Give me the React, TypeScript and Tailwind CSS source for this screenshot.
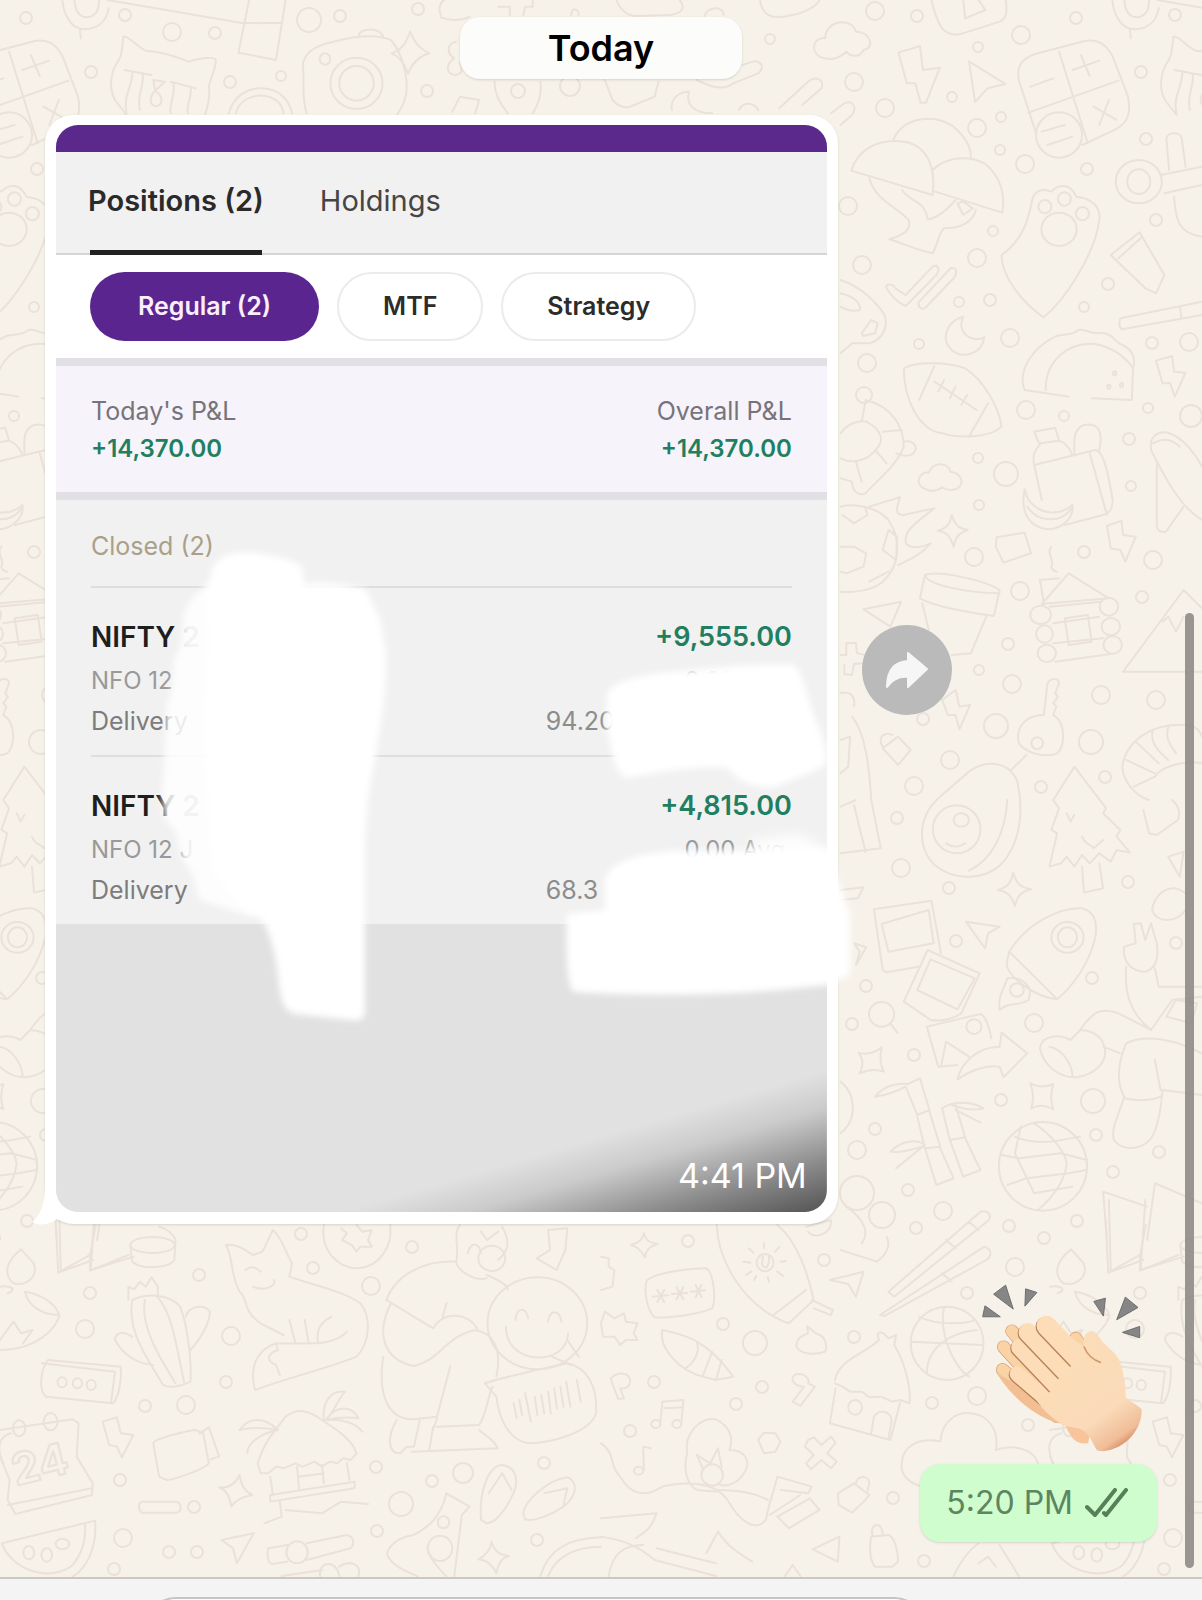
import React from 'react';

interface Position {
    id: number;
    name: string;
    suffix: string;
    exchange: string;
    product: string;
    price: string;
    pnl: string;
}

interface Sheet {
    x: number;
    y: number;
    paths: string[];
}

const positions: Position[] = [
    { id: 1, name: 'NIFTY', suffix: '2', exchange: 'NFO 12', product: 'Delivery', price: '94.20', pnl: '+9,555.00' },
    { id: 2, name: 'NIFTY', suffix: '2', exchange: 'NFO 12 J', product: 'Delivery', price: '68.3', pnl: '+4,815.00' },
];

const filters = ['Regular (2)', 'MTF', 'Strategy'];

const WALLPAPER_PERIOD = 1050;

// [cx, cy, r]
const bubbles = [
    [875, 11, 9], [917, 16, 6], [770, 39, 5], [854, 82, 9], [885, 108, 9], [978, 47, 5], [1021, 35, 9], [952, 97, 5],
    [1001, 117, 5], [977, 128, 9], [1000, 150, 5], [1025, 164, 9], [1076, 18, 6], [1175, 15, 6], [1141, 72, 6],
    [1146, 139, 6], [1087, 169, 6], [1156, 220, 6], [1108, 284, 6], [1084, 307, 5], [848, 206, 9], [862, 265, 9],
    [977, 258, 9], [993, 231, 5], [990, 300, 6], [959, 302, 5], [1010, 338, 9], [919, 344, 5], [867, 363, 9],
    [1152, 343, 6], [1189, 342, 9], [864, 395, 8], [1026, 410, 9], [1064, 416, 5], [1148, 408, 5], [1191, 416, 11],
    [1129, 439, 6], [978, 458, 5], [1006, 474, 12], [1131, 486, 5], [979, 505, 5], [974, 557, 9], [1084, 552, 6],
    [1153, 560, 9], [1020, 591, 9], [1142, 597, 6], [1008, 644, 6], [979, 670, 5], [1012, 684, 9], [1101, 695, 9],
    [1156, 700, 9], [923, 719, 6], [996, 726, 12], [1091, 742, 12], [950, 760, 9], [914, 786, 9], [1105, 777, 6],
    [1041, 787, 6], [897, 818, 6], [901, 868, 9], [949, 888, 6], [1128, 882, 6], [956, 941, 6], [1176, 943, 6],
    [1092, 978, 6], [866, 986, 6], [852, 1024, 6], [1034, 1023, 9], [914, 1055, 6], [1001, 1100, 6], [1093, 1101, 12],
    [875, 1129, 6], [1096, 1135, 6], [857, 1150, 9], [1159, 1152, 6], [1113, 1172, 6], [908, 1190, 6], [857, 1193, 17],
    [882, 1215, 13], [943, 1211, 9], [916, 1228, 6], [1009, 1226, 6], [1077, 1221, 6], [1044, 1238, 6],
    [309, 20, 12], [340, 16, 6], [172, 32, 9], [215, 33, 6], [230, 82, 6], [281, 76, 5], [427, 91, 6], [418, 9, 6],
    [518, 91, 7], [570, 86, 10], [301, 1234, 6], [313, 1268, 6], [199, 1275, 6], [90, 1293, 6], [85, 1329, 9],
    [231, 1336, 9], [226, 1382, 6], [145, 1406, 6], [186, 1405, 9], [371, 1286, 9], [412, 1247, 6], [120, 1480, 6],
    [376, 1467, 6], [432, 1481, 6], [463, 1473, 10], [544, 1463, 6], [401, 1504, 12], [194, 1507, 6], [123, 1538, 9],
    [169, 1552, 6], [197, 1552, 6], [377, 1531, 6], [537, 1540, 6], [114, 1569, 6], [688, 1241, 6], [824, 1260, 6],
    [723, 1324, 6], [755, 1343, 12], [854, 1337, 6], [654, 1382, 6], [762, 1387, 6], [736, 1404, 6], [630, 1431, 6],
    [967, 1293, 6], [1015, 1267, 9], [977, 1396, 9], [932, 1403, 6], [1028, 1425, 6], [893, 1498, 6], [924, 1561, 6],
];

const oval = (x: number, y: number, rx: number, ry: number) =>
    `M${x - rx} ${y}a${rx} ${ry} 0 1 0 ${rx * 2} 0a${rx} ${ry} 0 1 0 ${-rx * 2} 0`;

const sheets: Sheet[] = [
    {
        x: 0,
        y: 0,
        paths: [
            // cat box
            'M322 110C335 105 355 140 380 152C430 155 470 175 492 185C520 172 560 170 563 180C565 200 550 230 545 260C550 300 540 320 535 345M322 110C318 140 320 160 310 180C285 220 285 270 300 300L330 345',
            'M325 210L395 225M345 220C345 260 320 290 330 340M372 222C378 260 355 280 365 330M445 245L510 265M452 250C460 280 440 310 445 340M497 262C502 290 485 310 490 340M400 240L430 245L402 275C385 300 395 320 410 318C430 310 420 280 405 275Z',
            // kite
            'M280 0L635 70M650 0L622 158L720 180L745 0M635 70L735 68',
            // camera
            'M800 340C785 290 795 230 790 190C800 150 830 135 870 125C920 110 980 100 1020 120C1050 160 1065 230 1060 280C1055 310 1045 330 1035 345M935 105C945 85 985 80 1000 108',
            oval(930, 250, 68, 77), oval(930, 250, 45, 52), oval(848, 177, 14, 17),
            'M1070 95C1085 140 1105 150 1120 160C1090 170 1075 190 1065 220C1050 180 1035 165 1022 160C1055 145 1060 125 1070 95Z',
            'M1190 125C1165 130 1165 160 1185 175C1160 195 1165 225 1190 225C1210 220 1205 200 1200 190',
            'M597 340C610 285 650 262 685 265C730 268 755 300 762 340M615 340C625 300 655 285 685 287C720 290 735 310 740 340',
            'M1180 335L1200 290L1250 300L1240 340M1290 245C1290 290 1310 320 1325 340M1410 245C1415 290 1400 320 1390 340',
            'M1150 45C1140 20 1155 0 1160 0M1150 52C1180 65 1210 60 1225 50M1300 20L1330 20L1330 45M1390 0L1390 20L1370 20L1365 45M1490 45C1490 20 1510 25 1510 45',
        ],
    },
    {
        x: 601,
        y: 0,
        paths: [
            'M570 170C545 150 555 110 585 115C585 60 655 50 665 95C705 95 715 145 685 150C675 175 650 170 640 155C620 175 600 185 570 170Z',
            'M776 158L832 138L840 210L884 203L848 308L834 308L820 250L798 250Z',
            'M960 184L1055 252L1008 265L976 306Z',
            // calculator
            'M1135 400L1090 240C1084 200 1095 178 1130 163L1265 122C1300 118 1320 135 1335 170L1375 290C1385 350 1370 375 1330 395L1255 435M1195 155L1270 430M1115 338L1350 242M1120 260L1180 235M1230 210L1300 182M1252 165L1275 228M1285 320L1345 360M1325 300L1300 375',
            oval(1195, 405, 60, 68),
            'M1150 395L1210 375M1165 435L1230 410',
            'M862 0C868 30 875 60 890 85C905 105 930 108 950 98L1040 65C1060 55 1060 30 1056 0M945 0L950 55L1003 30L985 0',
            'M1334 0C1338 50 1360 90 1395 88C1430 85 1450 60 1455 25M1365 0C1368 35 1380 52 1398 52C1420 50 1430 30 1430 0M1380 88L1382 115',
            // balloons
            'M653 512C670 450 720 415 790 425C850 435 875 500 865 585ZM763 418C790 350 870 340 920 380C950 410 965 440 965 470M865 510C900 470 960 465 1000 490C1045 530 1055 590 1047 638L872 575',
            'M700 535C715 600 770 620 803 660C810 690 790 705 752 718C790 730 820 750 865 760C880 730 880 700 895 685C940 685 970 665 978 630M785 570C810 610 845 600 852 658C880 655 905 625 925 600M930 610L945 605L970 625L945 645Z',
            // paw
            'M1125 600C1130 570 1155 565 1175 575C1195 550 1225 550 1240 590C1280 595 1305 620 1300 660C1290 760 1210 900 1155 952C1100 910 1045 830 1045 765C1100 720 1115 660 1125 600Z',
            oval(1158, 620, 17, 20), oval(1209, 597, 17, 20), oval(1256, 641, 17, 20), oval(1195, 688, 46, 50),
            'M745 865C740 850 760 850 768 865L795 885L865 800C880 790 885 810 875 825L795 918C775 910 755 885 745 865ZM830 905L912 805C930 800 930 820 920 835L845 925C832 930 825 915 830 905Z',
            'M945 950C900 965 885 1020 915 1050C945 1080 995 1060 1000 1012C970 1030 925 1000 945 950Z',
            // taco
            'M1220 1190L1105 1170C1085 1110 1130 1040 1185 1010C1200 1000 1230 1010 1245 990C1270 985 1275 1005 1300 998C1340 1000 1335 1025 1360 1035C1390 1050 1395 1080 1388 1105L1385 1200L1280 1195M1160 1170C1160 1080 1220 1025 1290 1032C1350 1045 1380 1090 1388 1105',
            oval(1340, 1120, 4, 6), oval(1325, 1160, 4, 6), oval(1358, 1155, 4, 6),
            'M1330 765L1405 697L1470 825L1448 880L1420 865ZM1350 775L1412 710',
            oval(1403, 545, 60, 65), oval(1403, 545, 30, 37),
            'M1460 525L1568 500M1470 580L1568 555M1482 510L1475 415C1480 395 1510 395 1515 415L1525 500M1495 590C1500 650 1500 700 1568 710',
            'M1568 905L1355 955C1350 970 1352 985 1360 988L1568 945M1510 920L1515 955',
            'M1448 1082L1490 1068L1495 1115L1525 1118L1497 1190L1485 1150L1465 1150Z',
            // ball
            'M790 1105C820 1085 900 1085 950 1105C1000 1140 1040 1230 1045 1280C1020 1310 940 1318 890 1300C830 1290 790 1200 790 1105ZM870 1098L830 1200M1010 1210L960 1310M870 1145L980 1230M895 1140L880 1175M925 1160L910 1195M955 1185L940 1215',
            'M625 840C680 860 720 910 740 945C750 980 735 1020 700 1030L655 1030L625 1060M680 1000L705 960L722 970L715 1000L685 1008ZM625 880C660 890 680 910 675 930C660 935 640 930 625 920',
            'M465 325L540 245C560 225 585 240 575 265L525 315M600 340L635 310C655 300 670 320 655 345L625 375',
            'M10 240L30 300C50 325 70 325 80 318L140 290L150 245M185 330C180 300 200 275 230 275C220 310 240 340 290 340M250 240C300 270 330 265 345 250L410 220C430 200 415 180 395 185L370 195M360 330C370 305 400 305 410 330',
            'M40 0C50 30 70 48 90 48L180 45C215 40 220 20 205 0M415 0C420 50 450 60 500 45C540 35 565 15 570 0M270 48C275 20 320 15 320 45',
        ],
    },
    {
        x: 601,
        y: 400,
        paths: [
            // turtle
            'M690 0C760 20 790 80 790 140C770 200 720 240 690 280C670 290 655 270 655 245L625 235M790 125C815 120 830 140 815 160C800 175 780 165 770 160M625 100C650 60 690 60 700 70C730 90 740 120 720 145C690 190 650 190 625 175M690 5L680 65M735 95L785 90M715 150L745 190M665 185L680 245',
            // picnic bag and banana
            'M1150 300L1130 195L1290 150C1310 155 1320 200 1335 300C1335 330 1325 340 1310 345L1210 375M1130 95L1185 83L1195 122C1215 130 1225 150 1230 165M1130 95L1145 135C1130 150 1125 170 1130 195M1145 130L1195 122M1235 160C1235 120 1230 90 1260 75C1300 65 1310 100 1300 150M1275 160L1320 345',
            'M1105 268C1095 330 1110 380 1165 388C1205 388 1235 350 1230 315C1200 345 1150 350 1115 300ZM1112 320C1140 370 1200 370 1228 325',
            'M835 260C820 240 835 215 855 218C865 185 905 185 912 215C940 220 950 250 930 265C915 275 900 268 890 262C870 280 850 272 835 260Z',
            'M1568 360C1510 320 1470 230 1435 150C1430 110 1450 95 1475 97C1520 110 1555 170 1568 200M1440 130C1470 110 1490 120 1510 140M1450 190L1450 380C1455 400 1475 400 1480 385L1520 320',
            'M915 345C925 380 935 385 957 390C930 400 925 415 920 440C910 405 900 395 878 392C900 385 910 375 915 345Z',
            'M1032 412L1105 398L1122 460L1050 488L1030 440Z',
            'M1320 378L1358 362L1362 405L1395 410L1368 485L1355 450L1330 445Z',
            // flaming football
            'M625 320C660 310 720 320 750 360C785 420 780 500 735 545C710 570 660 580 625 575M700 320L780 292C770 330 765 345 790 345L870 325C820 370 790 390 795 430C810 450 840 440 860 430C830 470 800 480 775 495M630 345L660 370L695 345L690 325M625 440L660 440L692 460L685 500L640 520L625 515M750 390L772 410L770 480L735 450ZM700 545L750 515',
            // pot
            'M845 525C880 510 1000 540 1040 570L1025 648C970 640 870 620 832 595ZM845 525C850 555 960 580 1040 580M838 610L855 690M1005 650L965 760L915 765',
            'M1175 440C1160 460 1185 480 1175 500C1175 510 1185 515 1190 515',
            // log cabin
            'M1150 612L1220 520L1325 595ZM1155 605L1145 540L1195 535M1170 620L1305 605M1180 670L1300 650M1180 730L1310 715M1185 785L1330 762M1210 655L1270 645L1280 725L1220 735Z',
            oval(1147, 645, 27, 28), oval(1325, 620, 24, 27), oval(1157, 702, 22, 26), oval(1330, 680, 24, 26), oval(1163, 760, 24, 26), oval(1335, 735, 24, 26),
            'M1568 625L1520 570L1362 815L1568 815M1465 665L1480 650L1500 695L1520 650',
            'M685 628L783 605L755 680Z',
            // key
            'M1155 945L1165 850C1175 830 1195 835 1195 850L1185 880L1192 890L1180 910L1188 920L1180 945C1215 970 1210 1040 1190 1060C1160 1075 1110 1060 1090 1030C1080 980 1110 945 1155 945ZM1110 1065L1070 1110',
            oval(1138, 1030, 15, 18),
            // avocado
            'M880 1195C820 1260 830 1350 870 1395C930 1450 1020 1440 1060 1370C1100 1300 1100 1210 1085 1140C1060 1080 1000 1080 960 1115ZM1060 1200C1055 1300 1020 1380 960 1412M900 1330C920 1345 940 1340 950 1330',
            oval(928, 1288, 62, 72), oval(940, 1260, 20, 20),
            'M735 1045L775 1010L808 1050L775 1095ZM735 1040C720 1010 740 995 760 1005',
            // shrimp
            'M1568 1010C1560 980 1540 975 1520 975C1440 970 1370 1020 1360 1100C1362 1150 1400 1190 1430 1200M1480 980C1470 1020 1490 1040 1500 1060M1440 990C1430 1030 1460 1060 1480 1080M1395 1025L1455 1090M1370 1080L1445 1120M1445 1130C1460 1100 1520 1080 1568 1090M1390 1160L1445 1130',
            // pine
            'M1235 1100L1180 1200L1195 1225L1175 1290L1190 1300L1170 1400L1200 1390L1215 1370L1235 1400L1255 1365L1275 1390L1300 1360L1330 1385L1345 1350L1380 1358L1345 1310L1355 1290L1310 1240L1318 1225ZM1255 1400L1260 1478L1310 1465L1300 1390M1215 1240L1225 1265L1235 1245M1255 1310C1265 1340 1280 1330 1285 1345L1310 1320',
            'M625 880C650 870 665 890 660 920M655 950C690 1000 700 1100 705 1200M625 1020L650 1010L645 1100L625 1120',
            'M890 900L925 870L935 920L963 915L935 988L925 945L905 945Z',
            'M625 765L640 765L640 730L665 728L668 760L690 765L685 790L660 792L655 825L635 822L635 795',
        ],
    },
    {
        x: 601,
        y: 800,
        paths: [
            'M625 20L665 0M625 160L730 145L705 0M690 155L660 15M625 270L685 262L670 295L625 300',
            'M1075 218C1085 255 1095 262 1122 268C1095 275 1085 290 1080 318C1070 285 1060 275 1035 270C1060 262 1070 250 1075 218Z',
            // photos
            'M828 500L745 517L735 510L712 328L862 302L887 460M732 372L855 330L868 430L750 455Z',
            'M852 450L988 520L940 640C920 655 890 665 860 660L790 605ZM860 478L975 535L930 628L825 570Z',
            'M952 365L1040 380L1010 400L1002 445ZM660 430L692 442L665 495L675 455Z',
            // rocket
            'M1065 455C1110 370 1200 320 1255 325C1290 335 1295 370 1290 410C1275 490 1230 560 1190 598C1130 590 1060 530 1058 490ZM1065 455L1190 598M1060 535C1100 530 1130 560 1115 600C1090 620 1060 605 1040 630C1035 590 1050 570 1060 535Z',
            oval(1217, 412, 42, 46), oval(1217, 412, 25, 30), oval(1085, 570, 18, 20),
            oval(732, 643, 33, 37),
            'M755 670L773 698M930 795L880 800L850 680L990 642C1005 650 1015 690 1018 715M888 795L900 725L960 770',
            oval(973, 680, 20, 22),
            'M930 838C940 790 980 740 1040 740L1045 698L1112 760L1050 832L1040 800C1000 795 960 815 930 838Z',
            'M672 758C690 765 715 760 733 742C725 770 730 800 738 815C715 805 695 810 675 820C685 795 685 780 672 758Z',
            'M1120 850C1140 862 1160 862 1180 852C1172 880 1172 900 1180 928C1160 915 1140 915 1122 925C1130 900 1130 880 1120 850Z',
            // bamboo
            'M715 890C740 855 770 850 800 852L832 835L857 930L825 945L795 860C770 875 750 885 715 890M825 950L845 1045L885 1040L857 935M845 1045L875 1155L920 1135L885 1045M890 925L910 1020L950 1012L925 915M890 925C920 900 970 905 998 925C970 935 940 925 915 915M925 930L990 968M910 1020L945 1130L990 1110L950 1015M840 1040C820 1045 790 1060 755 1055C790 1015 830 1020 845 1035L770 1105',
            // globe
            oval(1153, 1099, 115, 133),
            'M1130 970C1170 1000 1210 1050 1215 1090C1210 1150 1170 1200 1140 1230M1080 1010C1140 1040 1200 1020 1250 1010M1045 1065L1090 1075L1200 1060L1268 1080M1060 1155L1110 1135L1220 1120L1265 1110M1095 980L1080 1060L1130 1180L1230 1160',
            // astronaut
            'M1365 440C1360 480 1380 515 1420 515C1450 505 1455 470 1450 430L1435 370L1420 420L1408 370L1390 372L1395 430ZM1370 500C1365 580 1380 640 1435 690L1490 600L1568 590M1445 505L1455 560L1568 560',
            'M1435 690L1350 640C1300 620 1280 640 1250 690L1225 720C1200 705 1150 700 1145 745C1155 800 1200 835 1240 832C1290 825 1330 780 1310 730C1300 700 1270 690 1250 690M1170 740C1200 745 1230 790 1230 830M1310 740L1355 760',
            'M1568 760C1500 720 1420 700 1370 730C1345 800 1345 850 1365 890C1350 950 1330 980 1338 1020C1360 1055 1410 1050 1435 1015C1450 990 1460 940 1465 870L1568 885M1365 895C1400 905 1440 900 1460 890M1460 870L1445 780M1475 650L1500 600L1555 610L1540 670Z',
            'M1415 30L1430 100L1450 105L1505 60C1515 30 1500 10 1490 0M1525 280C1480 240 1440 290 1438 330C1450 370 1500 370 1525 330M1480 170L1520 155L1510 230Z',
            'M625 845C665 880 670 960 625 1000',
            'M1320 1320L1310 1175L1425 1220M1425 1320L1445 1150L1568 1210',
        ],
    },
    {
        x: 0,
        y: 1200,
        paths: [
            'M845 75C835 150 880 205 935 205C990 200 1025 140 1018 75M930 75L945 95L970 90L960 120L970 140L940 140L930 155L918 135L892 120L905 100L890 85',
            'M145 60L152 218L235 165L250 75M235 165L235 212L335 165',
            oval(398, 135, 58, 24),
            'M340 140L345 185C370 210 440 205 455 180L458 120C450 95 430 85 415 80',
            // candle
            'M55 148C20 180 5 220 35 250C70 260 100 230 88 190ZM65 275C100 280 150 310 155 350C130 420 60 450 0 450M65 275C75 320 110 345 155 345M0 420L35 365L55 400L85 390L60 430M0 260C30 255 45 270 20 280',
            // cactus
            'M345 300C380 280 440 280 470 320C490 380 500 480 497 545C470 560 440 565 425 555C390 480 330 400 345 300ZM378 300C365 380 420 480 458 550M410 290C450 340 460 440 480 545M335 300L335 260L350 268L365 245L380 260L395 232L412 260L412 285M485 350C490 320 530 310 548 335C545 380 520 420 497 450M345 410C320 390 300 400 300 420C320 460 350 490 400 495',
            // fox
            'M625 275C600 220 610 180 590 135C620 130 645 155 660 165L685 155L712 90C735 110 745 160 762 190L755 230C830 260 900 275 940 310C970 350 965 430 930 470C870 500 760 530 665 570C650 500 670 450 720 430C800 430 870 440 905 395M625 275C650 300 630 330 680 370L740 405M755 360L770 425M795 360L805 428M865 350C830 370 825 400 830 428M720 430L725 450C700 460 690 480 720 495L730 525M640 210C660 190 675 210 680 215M660 260C690 275 720 260 715 240',
            // message
            'M125 480L315 500C318 540 310 590 295 610L120 590C100 570 105 510 125 480ZM110 490L300 515L290 605',
            oval(162, 547, 12, 15), oval(202, 550, 12, 15), oval(238, 555, 12, 15),
            // calendar
            'M0 690L190 658L205 670L200 770L242 850L240 885L40 942L20 900L25 840L0 770M20 915L240 865',
            oval(50, 685, 16, 24), oval(132, 665, 18, 26),
            'M268 665L305 652L315 700L348 705L318 772L305 740L285 735Z',
            'M400 730C400 715 500 690 510 690L530 700L545 790C530 810 450 840 435 840L415 830ZM520 700L545 682L572 770L550 778',
            // beach hut
            'M672 790C690 720 720 690 745 650C780 620 810 635 840 660C880 690 920 720 930 760L915 780L895 775L880 790L860 785L840 800L820 785L790 800L770 790L740 805L720 800L700 820L680 820ZM705 830L712 885M905 790L912 840M705 885L925 845L925 865L705 905ZM775 800L780 865M840 795L845 850M778 830L845 820M730 905L735 950L690 970M745 930L840 940L890 905L960 912',
            'M725 690C690 650 650 650 625 690C660 680 700 685 725 690C680 700 645 730 645 760M845 660C840 610 860 570 900 575C880 600 870 640 850 660C880 610 920 620 935 655C900 650 870 655 850 660C890 655 930 670 945 695',
            'M370 905L460 905C475 910 475 935 460 938L370 938C360 930 360 910 370 905Z',
            'M625 825C630 860 640 875 658 885C630 890 615 900 603 920C600 890 590 870 572 862C600 865 615 850 625 825Z',
            'M578 1020L662 1000L618 1090L608 1045Z',
            // watermelon
            'M5 1030L248 962C255 1050 220 1110 190 1130M5 1030C30 1110 130 1150 190 1095C215 1060 225 1020 222 970',
            oval(75, 1058, 14, 20), oval(122, 1065, 14, 20), oval(163, 1032, 18, 16),
            'M750 1035L700 1045C695 1070 700 1090 710 1092L750 1085M800 1030L905 1005C925 1010 925 1035 915 1045L800 1080M735 1128L840 1110M835 1128C830 1080 880 1080 885 1128M885 1100C910 1080 945 1090 935 1128',
            oval(775, 1057, 28, 33),
            // person with a balloon
            'M1008 300C1030 230 1100 180 1190 185C1195 215 1240 245 1270 235M1190 185C1200 150 1180 100 1200 75M1310 80C1330 120 1330 150 1300 180M1270 225C1300 240 1320 250 1325 268M1220 160C1230 120 1250 130 1255 160M1255 95L1270 120L1300 95',
            oval(1283, 175, 35, 38),
            'M1008 300L1130 385C1160 330 1220 340 1245 385M1165 310L1155 350M1020 310C980 400 1000 480 1080 498C1150 480 1160 410 1240 390C1290 400 1310 450 1295 530M1000 470C985 580 1010 660 1080 658L1140 650L1175 498M1140 680L1250 675C1270 640 1270 600 1285 560M1035 660C1010 710 1010 760 1045 760L1060 740L1080 740L1095 662M1130 680L1120 750M1075 755L1298 745C1290 715 1260 705 1250 690M1140 655L1130 690',
            oval(1402, 370, 130, 138),
            'M1345 360C1345 320 1375 320 1378 355M1430 365C1435 325 1460 330 1465 365M1320 380C1320 500 1480 500 1482 400M1440 470L1490 495M1480 420L1510 470',
            'M1265 550C1290 540 1400 510 1480 490C1530 500 1560 560 1555 640C1540 700 1430 730 1380 730C1320 720 1300 640 1295 590Z',
            'M1340 610L1348 655M1355 600L1362 645M1370 580L1385 665M1395 590L1402 645M1412 585L1420 640M1430 575L1437 640M1446 565L1453 625M1462 560L1470 620M1477 545L1488 620M1505 540L1515 605',
            'M1430 90L1480 85L1475 150L1452 210L1400 175L1435 150Z',
            // flip-flops
            'M1255 960C1250 900 1265 800 1310 795C1350 800 1355 850 1335 890C1320 930 1290 970 1270 970ZM1275 880L1310 820L1335 870',
            'M1365 940C1370 900 1430 840 1480 832C1510 845 1505 890 1470 920C1430 950 1390 965 1370 958ZM1420 880L1480 865L1470 915',
            'M1080 1005C1120 980 1150 950 1165 880L1225 920L1205 945L1185 1130M1080 1005C1040 1010 1010 1040 1010 1065C1030 1110 1080 1120 1090 1130M1115 1040C1120 1080 1150 1110 1165 1130',
            oval(1148, 1045, 32, 38), oval(1157, 967, 15, 18),
            'M1282 1025C1290 1055 1305 1065 1328 1068C1305 1075 1300 1095 1295 1120C1285 1095 1270 1080 1248 1078C1270 1065 1280 1050 1282 1025Z',
            'M1410 1128C1430 1050 1480 1015 1568 1012M1430 1128C1450 1070 1500 1040 1568 1040',
        ],
    },
    {
        x: 601,
        y: 1200,
        paths: [
            'M112 100C118 125 128 128 148 132C125 140 118 150 115 172C105 150 95 140 78 135C98 130 108 120 112 100Z',
            'M120 240C150 215 240 205 275 205C295 220 300 300 290 325C250 345 170 355 140 352C120 330 110 270 120 240Z',
            'M135 290L175 286M147 270L165 306M165 270L147 306M185 282L225 278M197 262L215 298M215 262L197 298M235 275L272 271M247 255L262 291M262 255L247 291',
            // surfboard
            'M302 75C305 180 370 320 490 370L555 300C540 220 510 120 460 75M450 345L535 270M550 300L605 330L600 345L555 325M425 130L426 145M465 140L455 155M385 145L398 158M372 185L390 188M468 185L482 183M378 225L392 215M460 215L475 228M400 240L405 228M435 230L438 245M422 170L420 195C430 210 440 200 438 170',
            oval(428, 188, 22, 26),
            'M0 370L10 335L35 355L60 340L65 365L95 370L85 400L95 420L65 420L50 435L35 410L5 410Z',
            'M0 170L20 175L20 200L35 210L30 260L0 270',
            'M160 390C200 400 230 410 250 425C290 450 320 490 345 530L300 540L265 530C200 510 150 440 160 390ZM250 425C260 460 240 490 220 505M290 455L265 530M315 480L300 540',
            'M510 440C510 410 530 405 540 400L538 378L560 400C590 410 590 440 585 455C560 465 520 465 510 440Z',
            'M597 240L685 215L665 290L645 252Z',
            'M750 275L990 35C1010 30 1020 45 1012 60L765 290ZM728 345L1000 140C1020 145 1020 170 1005 180L740 348ZM900 120L925 145M960 65L985 90M890 220L915 245M535 80L600 60M540 95C560 120 600 100 600 65M640 20C690 60 700 100 680 130M625 150L720 185C750 160 755 130 745 110',
            oval(903, 430, 95, 110),
            'M895 320C880 400 920 500 960 530M808 425L995 435M830 350C880 380 960 370 975 360M850 520C850 450 900 400 980 390',
            // house
            'M610 540C620 480 690 460 725 420C720 400 720 395 735 398L750 415L770 405L765 435C790 480 810 560 805 610L780 600L760 605L730 590L700 592L680 575L650 575L630 560L610 550M612 565L597 670L755 720L780 610M705 700L712 650C730 620 765 640 757 670L750 715',
            oval(663, 622, 18, 22),
            'M840 860C800 850 780 820 785 790C785 740 830 710 885 725C890 660 930 635 965 640C1010 645 1040 690 1030 750C1080 730 1130 750 1140 790',
            'M155 665L160 605L215 600L210 665M165 625L213 622M130 745L110 740L112 810',
            oval(143, 672, 12, 12), oval(198, 672, 12, 12), oval(98, 812, 12, 12),
            'M25 535C50 510 80 520 75 550C70 570 55 565 50 565L60 595L45 598ZM500 605L530 560C500 560 490 530 510 522C540 520 545 545 540 550L558 560L520 618Z',
            'M540 720L555 712L575 735L600 710L612 728L590 760L615 785L600 805L575 780L548 808L535 790L555 765L532 740Z',
            'M225 760C215 700 260 650 300 658C340 680 345 720 335 750C380 750 390 790 375 815C360 850 330 860 310 855M225 760C215 800 220 850 250 870L300 875M265 805L250 765L285 790L305 745L315 800',
            oval(290, 825, 28, 32),
            'M0 730C40 760 20 800 50 830C80 890 120 890 160 860C230 840 300 850 330 900C360 960 400 1000 430 960C440 900 450 880 460 830L550 860L540 880L470 870M440 945L520 885M300 870C380 870 420 890 435 900',
            'M460 950L545 895L570 930L490 985Z',
            'M618 880L660 850L700 885L690 900L655 938L620 915ZM665 850C670 825 700 825 700 850L695 875',
            'M705 1010L750 1005C765 1010 775 1050 775 1085L760 1100L715 1100C700 1080 700 1040 705 1010ZM708 1005C700 970 735 960 735 1005',
            'M552 1048L622 1010L618 1085ZM410 720L425 698L455 700L468 725L455 755L425 760Z',
            'M0 1010C60 1020 100 1040 140 1080L300 1128M20 1128C30 1060 60 1035 110 1035M145 1045L300 1090M275 1060L305 995C330 1040 360 1060 395 1085M0 955L145 940C130 990 110 1000 90 1015M480 1128L500 1095L520 1128',
            'M920 1128C940 1080 960 1050 985 1030M1040 1035L1090 1128M985 1090L1010 1070L1030 1100',
            'M1325 0L1330 215L1415 180M1420 0L1408 210L1520 170M1180 790C1160 740 1170 710 1200 700',
        ],
    },
];

function Doodles() {
    return (
        <>
            {bubbles.map(([cx, cy, r]) => (
                <circle key={`${cx}-${cy}`} cx={cx} cy={cy} r={r} />
            ))}
            {sheets.map((sheet) => (
                <g key={`${sheet.x}-${sheet.y}`} transform={`translate(${sheet.x} ${sheet.y}) scale(0.3833 0.3333)`}>
                    {sheet.paths.map((d) => (
                        <path key={d} d={d} vectorEffect="non-scaling-stroke" />
                    ))}
                </g>
            ))}
        </>
    );
}

function Wallpaper() {
    return (
        <svg
            aria-hidden="true"
            className="pointer-events-none absolute inset-0 h-full w-full"
            fill="none"
            stroke="#eae1d9"
            strokeWidth="2"
            strokeLinecap="round"
            strokeLinejoin="round"
        >
            {[-1, 0, 1].map((n) => (
                <g key={n} transform={`translate(${n * WALLPAPER_PERIOD} 0)`}>
                    <Doodles />
                </g>
            ))}
            <text x="16" y="1486" fontSize="44" fontWeight="700" strokeWidth="2" transform="rotate(-14 16 1486)">
                24
            </text>
        </svg>
    );
}

// White marker strokes that hide the private part of the image
function Redactions() {
    return (
        <svg
            aria-hidden="true"
            className="pointer-events-none absolute inset-0 h-full w-full overflow-visible"
            viewBox="45 115 793 1109"
            preserveAspectRatio="none"
            fill="#fff"
        >
            <defs>
                <filter id="soft" x="-10%" y="-10%" width="120%" height="120%">
                    <feGaussianBlur stdDeviation="3" />
                </filter>
                <filter id="softer" x="-20%" y="-20%" width="140%" height="140%">
                    <feGaussianBlur stdDeviation="6" />
                </filter>
            </defs>
            <path
                filter="url(#soft)"
                opacity="0.86"
                d="M212 580L192 598L184 612L181 645L174 660L172 690L167 704L165 750L162 800L164 818L176 832L182 858L192 874L200 900L250 916L300 900L300 600Z"
            />
            <path
                filter="url(#soft)"
                d="M212 570C220 550 245 550 268 555C285 558 300 562 303 570L304 584C330 582 350 585 366 590C372 602 376 612 380 618C382 635 387 650 386 665C386 700 380 725 375 760C368 790 365 820 365 860L365 1010C365 1020 360 1021 350 1020L296 1014C284 1012 281 1000 279 985C277 960 272 940 264 922L236 900L212 870L204 740L208 640L206 600Z"
            />
            <path
                filter="url(#soft)"
                d="M607 695C610 682 640 676 660 673C700 670 760 662 795 665C803 675 806 690 812 710C820 732 828 745 826 764C810 775 790 780 775 787C750 788 738 780 728 768C700 765 660 772 626 778C612 770 612 745 606 725Z"
            />
            <path filter="url(#softer)" opacity="0.9" d="M752 840L800 834L828 850L828 900L752 900Z" />
            <path
                filter="url(#soft)"
                d="M605 880C608 862 640 852 680 851L828 849L845 900L850 915L850 975L828 985L780 990C700 997 620 995 574 992C567 985 566 960 567 914L605 910Z"
            />
        </svg>
    );
}

function ClappingHands() {
    const fingers = [
        { d: 'M172 343L320 470', width: 46 },
        { d: 'M180 263L320 410', width: 52 },
        { d: 'M204 218L350 370', width: 56 },
        { d: 'M260 198L400 345', width: 60 },
    ];

    return (
        <svg role="img" aria-label="Clapping hands" viewBox="60 70 490 510" className="mr-[14px] h-[170px] w-[163px]">
            <defs>
                <linearGradient id="palm" x1="0.2" y1="0.1" x2="0.75" y2="1">
                    <stop offset="0" stopColor="#fcddb8" />
                    <stop offset="0.7" stopColor="#fadab8" />
                    <stop offset="0.92" stopColor="#f0bd98" />
                    <stop offset="1" stopColor="#d98f6a" />
                </linearGradient>
            </defs>
            <g fill="#868686" stroke="#6d6d6d" strokeWidth="3" strokeLinejoin="round">
                <path d="M137 76L101 103L160 148Z" />
                <path d="M75 138L68 171L121 171Z" />
                <path d="M197 87L231 98L195 139Z" />
                <path d="M437 115L402 125L431 169Z" />
                <path d="M497 112L535 143L471 180Z" />
                <path d="M540 200L488 218L540 234Z" />
            </g>
            {/* rear hand */}
            <g fill="none" strokeLinecap="round">
                {['M156 214L220 290', 'M131 262L220 360', 'M128 330L290 470', 'M348 236L380 290'].map((d) => (
                    <g key={d}>
                        <path d={d} stroke="#d79b6d" strokeWidth="40" />
                        <path d={d} stroke="#f9d2a6" strokeWidth="36" />
                    </g>
                ))}
            </g>
            <path d="M110 340C140 390 210 470 300 492L300 450Z" fill="#f3bf92" />
            <path d="M315 495C335 540 350 556 385 551L395 500Z" fill="#f8c49c" />
            {/* front hand */}
            <g fill="none" strokeLinecap="round">
                {fingers.map((finger) => (
                    <g key={finger.d}>
                        <path d={finger.d} stroke="#b8835a" strokeWidth={finger.width} transform="translate(-3 3)" />
                        <path d={finger.d} stroke="#fcddb8" strokeWidth={finger.width} />
                    </g>
                ))}
            </g>
            <path
                d="M330 230L373 262C366 228 382 214 396 214C412 216 418 232 426 244C450 268 474 284 482 310C494 345 498 380 498 414C514 428 536 438 546 450C548 510 496 570 430 575L412 573C396 548 390 520 362 508C338 503 310 500 296 488C270 470 248 450 232 425L269 398L301 350L341 312Z"
                fill="url(#palm)"
            />
            <path d="M373 262C382 285 398 300 422 308" fill="none" stroke="#d39a70" strokeWidth="5" strokeLinecap="round" />
        </svg>
    );
}

function PositionRow({ position }: { position: Position }) {
    return (
        <li className="border-t-2 border-[#dedede] pt-[31px] pb-4">
            <div className="flex items-center justify-between text-[28px] leading-[36px] font-semibold">
                <span className="text-[#1e1e1e]">
                    {position.name} <span className="text-[#aaa]">{position.suffix}</span>
                </span>
                <span className="text-[27px] text-[#1f7f60]">{position.pnl}</span>
            </div>
            <div className="mt-2 flex justify-between text-2xl leading-[35px] text-[#999]">
                <span>{position.exchange}</span>
                <span>0.00 Avg.</span>
            </div>
            <div className="mt-[6px] flex justify-between text-[25px] leading-[35px] text-[#7c7c7c]">
                <span>{position.product}</span>
                <span className="w-[246px] text-[#8c8c8c]">{position.price}</span>
            </div>
        </li>
    );
}

function PortfolioImage() {
    return (
        <div className="relative overflow-hidden rounded-[22px] bg-[#e1e1e1]">
            <div className="h-[27px] bg-[#5b298c]" />

            {/* Tabs */}
            <div className="flex h-[103px] gap-14 border-b-2 border-[#d5d5d5] bg-[#f1f1f1] pr-8 pb-[3px] pl-8 text-[29px]">
                <button className="relative font-semibold text-[#2a2a2a]">
                    Positions (2)
                    <span className="absolute inset-x-[2px] -bottom-[5px] h-[5px] bg-[#222]" />
                </button>
                <button className="text-[#454545]">Holdings</button>
            </div>

            {/* Filters */}
            <div className="flex gap-[18px] bg-white px-[34px] py-[17px]">
                {filters.map((label, i) => (
                    <button
                        key={label}
                        className={
                            i === 0
                                ? 'h-[69px] rounded-full bg-[#5b258f] px-12 text-[25px] font-semibold text-[#fbeefb]'
                                : 'h-[69px] rounded-full border-2 border-[#ebebeb] bg-white px-11 text-[25px] font-semibold text-[#2c2c2c]'
                        }
                    >
                        {label}
                    </button>
                ))}
            </div>

            {/* Totals */}
            <div className="flex justify-between border-y-8 border-[#e2e0e5] bg-[#f6f3fa] px-[35px] pt-[27px] pb-[25px] leading-[37px]">
                <div className="flex flex-col">
                    <span className="text-[25px] text-[#76747a]">Today's P&amp;L</span>
                    <span className="text-[24px] font-semibold text-[#1f7f60]">+14,370.00</span>
                </div>
                <div className="flex flex-col items-end">
                    <span className="text-[25px] text-[#76747a]">Overall P&amp;L</span>
                    <span className="text-[24px] font-semibold text-[#1f7f60]">+14,370.00</span>
                </div>
            </div>

            {/* Closed positions */}
            <div className="bg-[#f1f1f1] px-[35px] pt-7">
                <h2 className="pb-[22px] text-[25px] leading-[36px] text-[#aaa088]">Closed (2)</h2>
                <ul>
                    {positions.map((position) => (
                        <PositionRow key={position.id} position={position} />
                    ))}
                </ul>
            </div>

            <div className="relative flex h-[288px] items-end justify-end">
                <svg
                    aria-hidden="true"
                    className="absolute inset-0 h-full w-full"
                    viewBox="0 0 772 288"
                    preserveAspectRatio="none"
                >
                    <defs>
                        <linearGradient id="corner" gradientUnits="userSpaceOnUse" x1="560" y1="208" x2="600" y2="345">
                            <stop offset="0" stopColor="#444" stopOpacity="0" />
                            <stop offset="0.25" stopColor="#444" stopOpacity="0.14" />
                            <stop offset="0.6" stopColor="#444" stopOpacity="0.54" />
                            <stop offset="1" stopColor="#444" stopOpacity="0.95" />
                        </linearGradient>
                    </defs>
                    <rect width="772" height="288" fill="url(#corner)" />
                </svg>
                <time className="relative pr-5 pb-4 text-[34px] leading-[40px] text-white">4:41 PM</time>
            </div>
        </div>
    );
}

export default function App() {
    return (
        <div className="relative flex h-screen flex-col overflow-hidden bg-[#f6f2ea] font-['Inter','Liberation_Sans',sans-serif]">
            <main className="relative flex-1 overflow-hidden px-[45px] pt-[17px]">
                <Wallpaper />

                <div className="relative flex justify-center">
                    <h1 className="rounded-[20px] bg-[#fcfcfb] px-[88px] py-[11px] text-[36px] leading-[40px] font-semibold text-black shadow-sm">
                        Today
                    </h1>
                </div>

                {/* Received image */}
                <div className="relative mt-9 flex items-center gap-6">
                    <div className="relative w-[71.3%] rounded-[28px] bg-white px-[11px] pt-[10px] pb-3 shadow-sm">
                        <svg
                            aria-hidden="true"
                            viewBox="0 0 40 40"
                            className="absolute -left-[15px] bottom-[-1px] h-10 w-10"
                            fill="#fff"
                        >
                            <path d="M15 0C15 18 11 30 2 37C8 41 20 40 27 34L40 39L36 0Z" />
                        </svg>
                        <PortfolioImage />
                        <Redactions />
                    </div>
                    <button
                        aria-label="Forward"
                        className="flex size-[90px] shrink-0 items-center justify-center rounded-full bg-[#bababa]"
                    >
                        <svg viewBox="0 0 44 38" className="h-[38px] w-11" fill="#f6f6f6" stroke="#f6f6f6" strokeWidth="2" strokeLinejoin="round">
                            <path d="M23 2L42 18L23 36V26C13 25 7 29 2 36C2 20 9 11 23 10Z" />
                        </svg>
                    </button>
                </div>

                {/* Sent emoji */}
                <div className="relative mt-[59px] flex flex-col items-end">
                    <ClappingHands />
                    <div className="mt-[11px] flex h-[78px] items-center gap-3 rounded-[20px] bg-[#cffdcd] pr-7 pl-[26px] text-[32px] text-[#5c8560] shadow-sm">
                        <time>5:20 PM</time>
                        <svg
                            aria-label="Delivered"
                            viewBox="0 0 44 30"
                            className="h-[30px] w-11"
                            fill="none"
                            stroke="#56805a"
                            strokeWidth="4"
                            strokeLinecap="round"
                            strokeLinejoin="round"
                        >
                            <path d="M2 19L10 27L30 2M19 25L21 27L41 2" />
                        </svg>
                    </div>
                </div>
            </main>

            <div className="absolute top-[613px] right-2 bottom-8 w-[9px] rounded-full bg-[#8f8b87]/90" />

            {/* Composer */}
            <footer className="relative h-[23px] shrink-0 overflow-hidden border-t-2 border-[#c9c8c6] bg-[#f5f4f4] pt-[18px]">
                <input
                    aria-label="Message"
                    className="ml-[12%] block h-16 w-[65%] rounded-[32px] border-2 border-[#c4c4c4] bg-white px-6 text-[28px] outline-none"
                />
            </footer>
        </div>
    );
}
